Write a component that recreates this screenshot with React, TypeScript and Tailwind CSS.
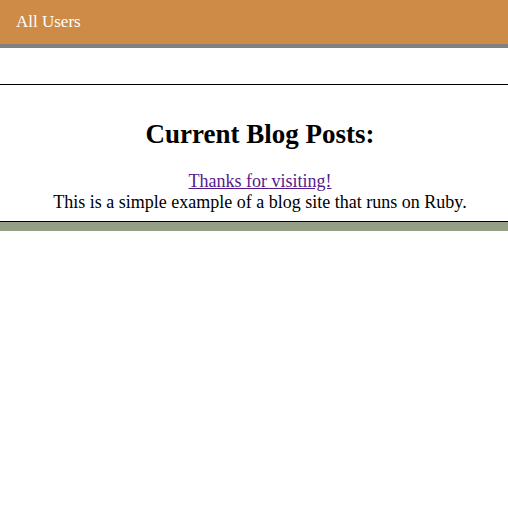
import React from "react";

export default function App() {
  return (
    <div className="w-full min-h-screen bg-white" style={{ fontFamily: '"Liberation Serif", "Times New Roman", serif' }}>
      <header className="h-[44px] bg-[#ce8b47] flex items-center px-4">
        <span className="text-white text-[17px] leading-[20px]">All Users</span>
      </header>
      <div className="h-[4px] bg-[#808080]" />
      <div className="h-[36px]" />
      <section className="border-t border-black text-center pt-[34px] pb-[8px] pl-[12px]">
        <h2 className="text-[27px] leading-[31px] font-bold text-black">Current Blog Posts:</h2>
        <div className="mt-[21px] text-[18px] leading-[21px]">
          <a href="#" className="text-[#551a8b] underline">Thanks for visiting!</a>
          <p className="text-black">This is a simple example of a blog site that runs on Ruby.</p>
        </div>
      </section>
      <div className="border-t border-black h-[10px] bg-[#949f86]" />
    </div>
  );
}
